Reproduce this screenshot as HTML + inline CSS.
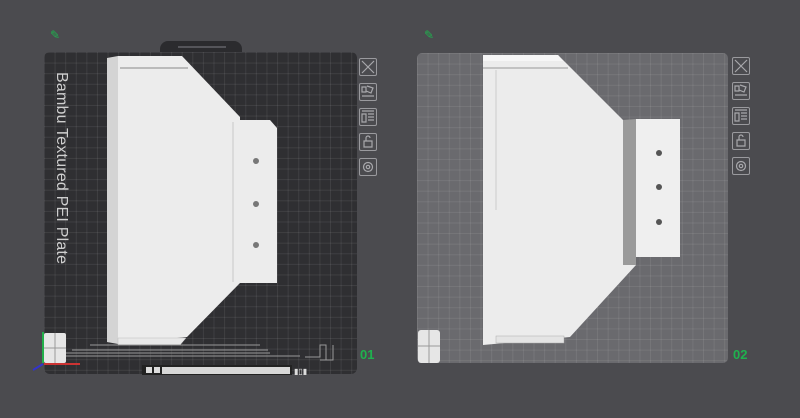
<!DOCTYPE html><html><head><style>
body{margin:0;width:800px;height:418px;background:#4b4b4f;position:relative;overflow:hidden;font-family:"Liberation Sans",sans-serif}
.a{position:absolute}
.grid{background-image:linear-gradient(90deg,rgba(255,255,255,.08) 1px,transparent 1px),linear-gradient(rgba(255,255,255,.08) 1px,transparent 1px);background-size:10.6px 10.6px}
.ic{position:absolute;width:18px;height:18px;border:1px solid #9a9a9e;border-radius:2px;box-sizing:border-box}
.num{position:absolute;color:#1fb24e;font-weight:bold;font-size:13px}
</style></head><body>
<div class="a" style="left:50px;top:28px;color:#1fb24e;font-size:12px">✎</div>
<div class="a" style="left:424px;top:28px;color:#1fb24e;font-size:12px">✎</div>
<div class="a" style="left:160px;top:41px;width:82px;height:14px;background:#2b2b2e;border-radius:8px 8px 0 0"></div>
<div class="a" style="left:178px;top:46px;width:48px;height:2px;background:#55555a"></div>
<div class="a grid" style="left:44px;top:52px;width:313px;height:322px;background-color:#2f2f32;border-radius:6px"></div>
<div class="a" style="left:55px;top:72px;width:14px;height:200px;"><div style="transform:rotate(90deg);transform-origin:0 0;position:absolute;left:15px;top:0;white-space:nowrap;color:#cfcfcf;font-size:16px;letter-spacing:.2px">Bambu Textured PEI Plate</div></div>
<svg class="a" style="left:0;top:0" width="800" height="418">
<polygon points="107,58 118,56 118,344 107,342" fill="#d4d4d4"/>
<polygon points="118,56 182,56 240,117 240,120 270,120 277,128 277,283 240,283 187,337 118,344" fill="#ececec"/>
<line x1="120" y1="68" x2="188" y2="68" stroke="#888" stroke-width="1"/>
<line x1="233" y1="122" x2="233" y2="282" stroke="#c8c8c8"/>
<polygon points="118,338 186,338 180,345 118,345" fill="#e8e8e8" stroke="#bbb" stroke-width=".5"/>
<circle cx="256" cy="161" r="3" fill="#777"/><circle cx="256" cy="204" r="3" fill="#777"/><circle cx="256" cy="245" r="3" fill="#777"/>
<g stroke="#999" stroke-width="1" fill="none"><path d="M90 345H260M72 350H268M65 353H270M60 356H300"/><path d="M305 357H320V345H326V360M320 360H333V345"/></g>
<rect x="44" y="333" width="22" height="30" rx="2" fill="#e6e6e6"/><path d="M55 333V363M44 348H66" stroke="#999"/>
<line x1="43" y1="332" x2="43" y2="363" stroke="#22b04a" stroke-width="2"/><line x1="44" y1="364" x2="80" y2="364" stroke="#c33" stroke-width="2"/><line x1="43" y1="364" x2="33" y2="370" stroke="#33c" stroke-width="2"/>
<rect x="142" y="365" width="150" height="10" fill="#222"/><rect x="162" y="367" width="128" height="7" fill="#d8d8d8"/>
<rect x="146" y="367" width="6" height="6" fill="#ddd"/><rect x="154" y="367" width="6" height="6" fill="#ddd"/>
<text x="294" y="374" fill="#ddd" font-size="8" font-family="Liberation Sans">▮▯▮</text>
</svg>
<div class="a grid" style="left:417px;top:53px;width:311px;height:310px;background-color:#6a6a6e;border-radius:5px"></div>
<svg class="a" style="left:0;top:0" width="800" height="418">
<polygon points="483,55 558,55 623,120 636,120 636,265 570,337 483,345" fill="#ececec"/>
<polygon points="483,55 558,55 563,61 483,61" fill="#f6f6f6"/><line x1="483" y1="68" x2="568" y2="68" stroke="#999"/>
<line x1="496" y1="70" x2="496" y2="210" stroke="#ccc"/>
<polygon points="623,120 636,119 636,265 623,265" fill="#9a9a9a"/>
<rect x="636" y="119" width="44" height="138" fill="#efefef"/>
<circle cx="659" cy="153" r="3" fill="#555"/><circle cx="659" cy="187" r="3" fill="#555"/><circle cx="659" cy="222" r="3" fill="#555"/>
<rect x="496" y="336" width="68" height="7" fill="#e4e4e4" stroke="#aaa" stroke-width=".5"/>
<rect x="418" y="330" width="22" height="33" rx="3" fill="#e6e6e6"/><path d="M429 330V363M418 346H440" stroke="#999"/>
</svg>
<div class="ic" style="left:359px;top:58px"></div><div class="ic" style="left:359px;top:83px"></div><div class="ic" style="left:359px;top:108px"></div><div class="ic" style="left:359px;top:133px"></div><div class="ic" style="left:359px;top:158px"></div>
<div class="ic" style="left:732px;top:57px"></div><div class="ic" style="left:732px;top:82px"></div><div class="ic" style="left:732px;top:107px"></div><div class="ic" style="left:732px;top:132px"></div><div class="ic" style="left:732px;top:157px"></div>
<svg class="a" style="left:0;top:0" width="800" height="418" fill="none" stroke="#a8a8ac" stroke-width="1.2">
<path d="M362 61l12 12M374 61l-12 12M735 60l12 12M747 60l-12 12"/>
<g><path d="M362 87h4v5h-4zM367 86l6 2-2 5-5-2M362 96h12"/><path d="M735 86h4v5h-4zM740 85l6 2-2 5-5-2M735 95h12"/></g>
<path d="M362 111h12M362 114h4v8h-4zM368 114h6M368 117h6M368 120h6M735 110h12M735 113h4v8h-4zM741 113h6M741 116h6M741 119h6"/>
<path d="M364 141h8v6h-8zM366 141v-3a2 2 0 0 1 4 0M737 140h8v6h-8zM739 140v-3a2 2 0 0 1 4 0"/>
<circle cx="368" cy="167" r="4.5"/><circle cx="368" cy="167" r="1.7"/><circle cx="741" cy="166" r="4.5"/><circle cx="741" cy="166" r="1.7"/>
</svg>
<div class="num" style="left:360px;top:347px">01</div>
<div class="num" style="left:733px;top:347px">02</div>
</body></html>
